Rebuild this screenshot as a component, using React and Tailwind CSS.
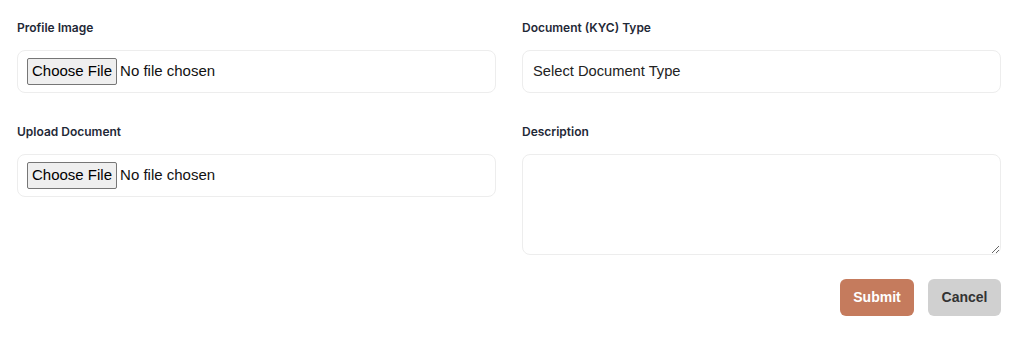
const fileCls =
  "text-[15px] text-[#111] font-['Liberation_Sans',Arial,sans-serif] file:mr-[3px] file:h-[27px] file:px-[4px] file:rounded-[2px] file:border file:border-solid file:border-[#767676] file:bg-[#efefef] file:text-[15px] file:text-black file:font-['Liberation_Sans',Arial,sans-serif]";

export default function App() {
  return (
    <div className="bg-white min-h-screen pl-[17px] pr-[23px] pt-[20px] font-['Liberation_Sans',Arial,sans-serif]">
      <div className="grid grid-cols-2 gap-x-[26px]">
        {/* Left column */}
        <div className="flex flex-col">
          <label className="font-['Inter',sans-serif] text-[12px] font-semibold text-[#1f2937] leading-[16px]">
            Profile Image
          </label>
          <div className="mt-[14px] h-[43px] flex items-center rounded-lg border border-[#ededed] px-[9px]">
            <input type="file" className={fileCls} />
          </div>

          <label className="mt-[31px] font-['Inter',sans-serif] text-[12px] font-semibold text-[#1f2937] leading-[16px]">
            Upload Document
          </label>
          <div className="mt-[14px] h-[43px] flex items-center rounded-lg border border-[#ededed] px-[9px]">
            <input type="file" className={fileCls} />
          </div>
        </div>

        {/* Right column */}
        <div className="flex flex-col">
          <label className="font-['Inter',sans-serif] text-[12px] font-semibold text-[#1f2937] leading-[16px]">
            Document (KYC) Type
          </label>
          <select className="mt-[14px] h-[43px] appearance-none rounded-lg border border-[#ededed] bg-white px-[10px] text-[14.7px] text-[#222] outline-none">
            <option>Select Document Type</option>
          </select>

          <label className="mt-[31px] font-['Inter',sans-serif] text-[12px] font-semibold text-[#1f2937] leading-[16px]">
            Description
          </label>
          <textarea className="mt-[14px] h-[101px] rounded-lg border border-[#ededed] px-[10px] py-2 text-[15px] outline-none" />

          <div className="mt-[24px] flex justify-end gap-[14px]">
            <button className="h-[37px] w-[74px] rounded-md bg-[#c57b5d] text-[14px] font-bold text-white">
              Submit
            </button>
            <button className="h-[37px] w-[73px] rounded-md bg-[#d0d0d0] text-[14px] font-bold text-[#333]">
              Cancel
            </button>
          </div>
        </div>
      </div>
    </div>
  );
}
